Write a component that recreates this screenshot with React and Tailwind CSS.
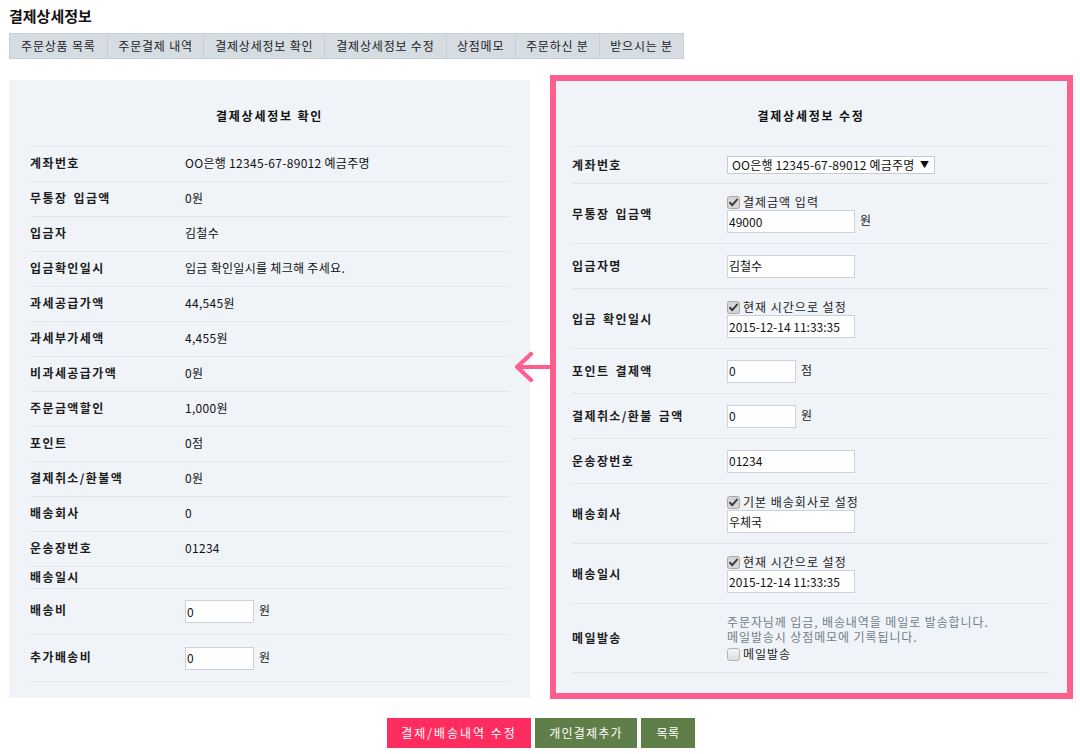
import React from "react";

const leftRows = [
  ["계좌번호", "OO은행 12345-67-89012 예금주명"],
  ["무통장 입금액", "0원"],
  ["입금자", "김철수"],
  ["입금확인일시", "입금 확인일시를 체크해 주세요."],
  ["과세공급가액", "44,545원"],
  ["과세부가세액", "4,455원"],
  ["비과세공급가액", "0원"],
  ["주문금액할인", "1,000원"],
  ["포인트", "0점"],
  ["결제취소/환불액", "0원"],
  ["배송회사", "0"],
  ["운송장번호", "01234"],
];

const tabs = [
  ["주문상품 목록", "w-[97px]"],
  ["주문결제 내역", "w-[97px]"],
  ["결제상세정보 확인", "w-[121px]"],
  ["결제상세정보 수정", "w-[122px]"],
  ["상점메모", "w-[69px]"],
  ["주문하신 분", "w-[85px]"],
  ["받으시는 분", "w-[84px]"],
];

const labelCls =
  "w-[155px] shrink-0 font-bold text-[12px] leading-[16px] text-[#1c1c1c] tracking-[1.4px] [word-spacing:2px]";

function Check({ checked }) {
  if (checked) {
    return (
      <svg width="13" height="13" viewBox="0 0 13 13" className="shrink-0">
        <rect x="0.5" y="0.5" width="12" height="12" rx="2" fill="#d6d6d6" stroke="#a9a9a9" />
        <path d="M3 6.8 L5.3 9.2 L10 3.6" fill="none" stroke="#3f3f3f" strokeWidth="2" strokeLinecap="round" strokeLinejoin="round" />
      </svg>
    );
  }
  return (
    <svg width="13" height="13" viewBox="0 0 13 13" className="shrink-0">
      <defs>
        <linearGradient id="ug" x1="0" y1="0" x2="0" y2="1">
          <stop offset="0" stopColor="#f7f7f7" />
          <stop offset="1" stopColor="#dcdcdc" />
        </linearGradient>
      </defs>
      <rect x="0.5" y="0.5" width="12" height="12" rx="2.5" fill="url(#ug)" stroke="#b4b4b4" />
    </svg>
  );
}

function Input({ value, w = "w-[128px]" }) {
  return (
    <div className={`${w} h-[23px] border border-[#cbd3da] bg-white pl-[1px] flex items-center text-[12px] leading-[14px] text-[#111]`}>
      {value}
    </div>
  );
}

function CheckLine({ label, checked = true }) {
  return (
    <div className="flex items-center gap-[3px] h-[16px] text-[12px] leading-[16px] text-[#222]">
      <Check checked={checked} />
      <span className="tracking-[1px]">{label}</span>
    </div>
  );
}

function RRow({ h, label, children }) {
  return (
    <div className={`${h} border-t border-[#e2e6ea] flex items-center`}>
      <div className={labelCls}>{label}</div>
      <div className="flex flex-col">{children}</div>
    </div>
  );
}

function Unit({ children }) {
  return <span className="ml-[5px] text-[12px] leading-[16px] -mt-[3px]">{children}</span>;
}

export default function App() {
  return (
    <div className="w-[1080px] min-h-[754px] bg-white font-['Noto_Sans_CJK_KR','Noto_Sans',sans-serif] text-[#222]">
      <div className="pl-[9px] pt-[6px]">
        <h1 className="text-[15px] font-bold leading-[20px] text-[#111]">결제상세정보</h1>

        <div className="mt-[7px] flex w-[675px] h-[26px] bg-[#d5dde2] border border-[#c6cfd5]">
          {tabs.map(([t, w], i) => (
            <div
              key={t}
              className={`${w} flex items-center justify-center text-[12px] leading-[16px] text-[#222] tracking-[0.8px] ${i > 0 ? "border-l border-[#c6cfd5]" : ""}`}
            >
              {t}
            </div>
          ))}
        </div>

        <div className="relative mt-[16px] flex items-start gap-[20px] w-[1064px]">
          {/* Left panel */}
          <div className="mt-[5px] w-[521px] bg-[#f0f4f9] px-[21px] pb-[16px]">
            <div className="pt-[27px] pb-[21px] text-center font-bold text-[12px] leading-[18px] text-[#111] tracking-[1.8px]">
              결제상세정보 확인
            </div>
            <div className="border-b border-[#e2e6ea]">
              {leftRows.map(([k, v]) => (
                <div key={k} className="h-[35px] border-t border-[#e2e6ea] flex items-center pb-[3px]">
                  <div className={labelCls}>{k}</div>
                  <div className="text-[12px] leading-[16px] text-[#111] tracking-[0.3px]">{v}</div>
                </div>
              ))}
              <div className="h-[22px] border-t border-[#e2e6ea] flex items-center pb-[1px]">
                <div className={labelCls}>배송일시</div>
              </div>
              <div className="h-[46px] border-t border-[#e2e6ea] flex items-center">
                <div className={`${labelCls} -mt-[3px]`}>배송비</div>
                <Input value="0" w="w-[69px]" />
                <Unit>원</Unit>
              </div>
              <div className="h-[47px] border-t border-[#e2e6ea] flex items-center">
                <div className={`${labelCls} -mt-[3px]`}>추가배송비</div>
                <Input value="0" w="w-[69px]" />
                <Unit>원</Unit>
              </div>
            </div>
          </div>

          {/* Right panel */}
          <div className="w-[523px] border-[6px] border-[#ff5f8f] bg-[#f0f4f9] pl-[16px] pr-[17px] pb-[20px]">
            <div className="pt-[26px] pb-[21px] text-center font-bold text-[12px] leading-[18px] text-[#111] tracking-[1.8px]">
              결제상세정보 수정
            </div>
            <div className="border-b border-[#e2e6ea]">
              <RRow h="h-[37px]" label="계좌번호">
                <div className="w-[208px] h-[18px] border border-[#c4ccd3] bg-white flex items-center justify-between pl-[4px] pr-[5px] text-[12px] leading-[14px] text-[#111]">
                  <span className="tracking-[0.2px]">OO은행 12345-67-89012 예금주명</span>
                  <span className="text-[9px]">▼</span>
                </div>
              </RRow>
              <RRow h="h-[60px]" label="무통장 입금액">
                <CheckLine label="결제금액 입력" />
                <div className="flex items-center">
                  <Input value="49000" />
                  <Unit>원</Unit>
                </div>
              </RRow>
              <RRow h="h-[45px]" label="입금자명">
                <Input value="김철수" />
              </RRow>
              <RRow h="h-[60px]" label="입금 확인일시">
                <CheckLine label="현재 시간으로 설정" />
                <Input value="2015-12-14 11:33:35" />
              </RRow>
              <RRow h="h-[45px]" label="포인트 결제액">
                <div className="flex items-center">
                  <Input value="0" w="w-[69px]" />
                  <Unit>점</Unit>
                </div>
              </RRow>
              <RRow h="h-[45px]" label="결제취소/환불 금액">
                <div className="flex items-center">
                  <Input value="0" w="w-[69px]" />
                  <Unit>원</Unit>
                </div>
              </RRow>
              <RRow h="h-[45px]" label="운송장번호">
                <Input value="01234" />
              </RRow>
              <RRow h="h-[60px]" label="배송회사">
                <CheckLine label="기본 배송회사로 설정" />
                <Input value="우체국" />
              </RRow>
              <RRow h="h-[60px]" label="배송일시">
                <CheckLine label="현재 시간으로 설정" />
                <Input value="2015-12-14 11:33:35" />
              </RRow>
              <RRow h="h-[69px]" label="메일발송">
                <div className="text-[12px] leading-[15px] text-[#717e88] tracking-[0.9px]">주문자님께 입금, 배송내역을 메일로 발송합니다.</div>
                <div className="text-[12px] leading-[15px] text-[#717e88] tracking-[0.9px]">메일발송시 상점메모에 기록됩니다.</div>
                <div className="mt-[2px]">
                  <CheckLine label="메일발송" checked={false} />
                </div>
              </RRow>
            </div>
          </div>

          {/* Arrow */}
          <svg
            className="absolute left-[506px] top-[276px]"
            width="36"
            height="32"
            viewBox="0 0 36 32"
          >
            <path
              d="M2 16 L36 16 M16 3 L2 16 L16 29"
              fill="none"
              stroke="#ff5f8f"
              strokeWidth="4.2"
              strokeLinecap="round"
              strokeLinejoin="round"
            />
          </svg>
        </div>

        <div className="mt-[19px] w-[1064px] flex justify-center gap-[4px]">
          <button className="w-[144px] h-[30px] bg-[#ff2d5f] text-white text-[12px] leading-[16px] tracking-[2px]">결제/배송내역 수정</button>
          <button className="w-[102px] h-[30px] bg-[#5f7e48] text-white text-[12px] leading-[16px] tracking-[1.2px]">개인결제추가</button>
          <button className="w-[54px] h-[30px] bg-[#5f7e48] text-white text-[12px] leading-[16px] tracking-[0.5px]">목록</button>
        </div>
      </div>
    </div>
  );
}
